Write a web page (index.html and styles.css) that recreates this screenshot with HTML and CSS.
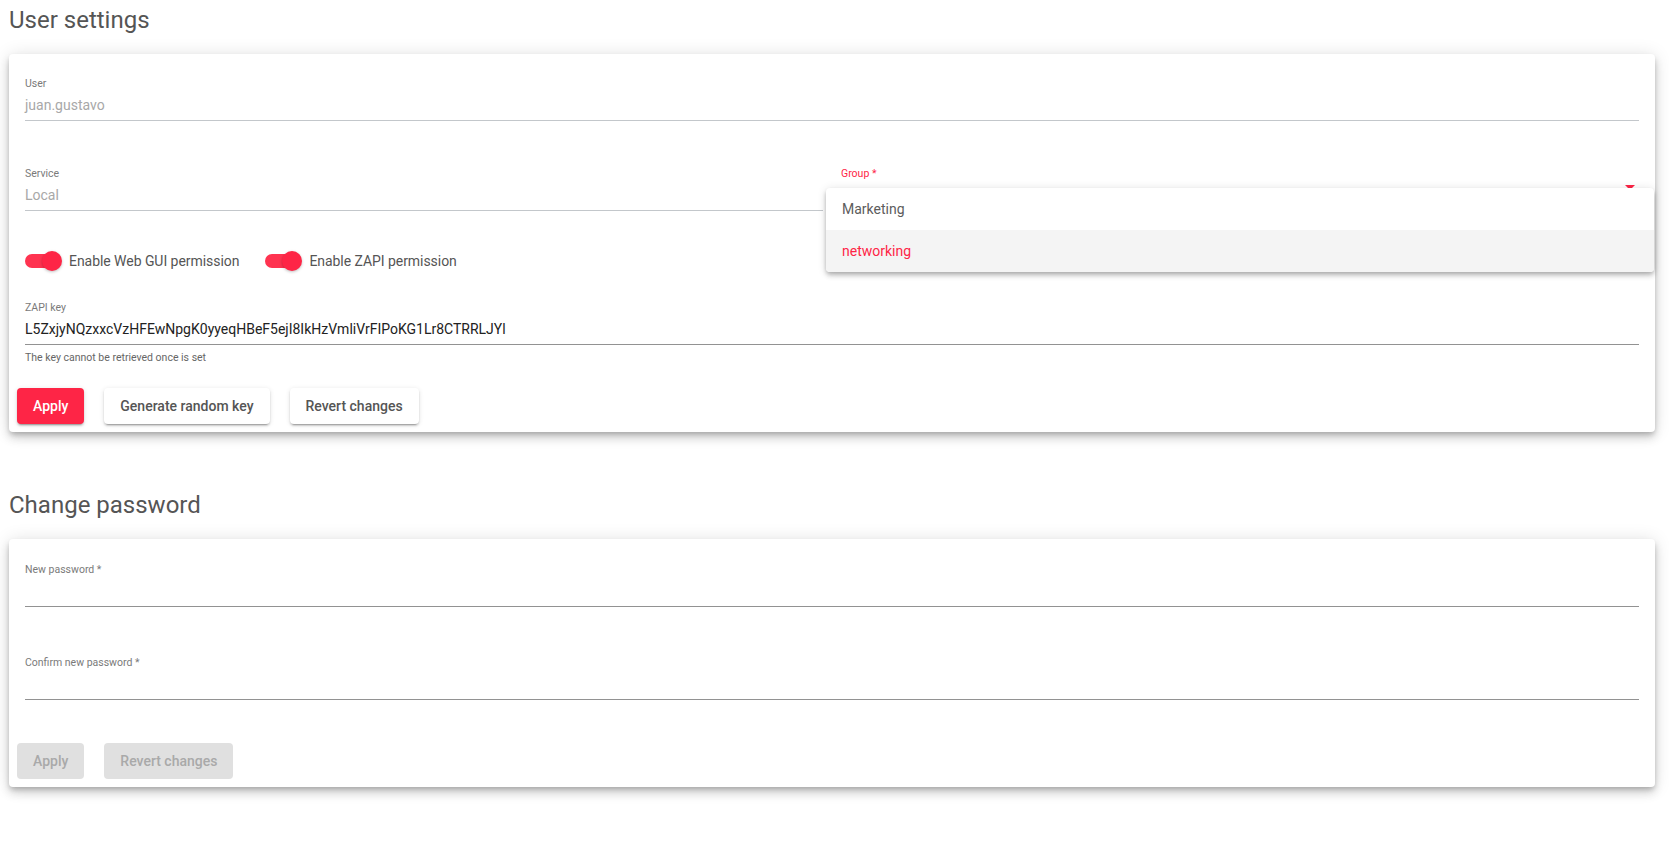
FILE: index.html
```html
<!DOCTYPE html>
<html lang="en">

<head>
    <meta charset="UTF-8">
    <meta name="viewport" content="width=device-width, initial-scale=1.0">
    <title>User settings</title>
    <link rel="stylesheet" href="styles.css">
</head>

<body>
    <div class="page">
        <h2 class="section-title">User settings</h2>

        <div class="card">
            <div class="field field-user">
                <div class="field-label">User</div>
                <div class="field-value muted">juan.gustavo</div>
            </div>

            <div class="two-cols">
                <div class="field">
                    <div class="field-label">Service</div>
                    <div class="field-value muted">Local</div>
                </div>
                <div class="field field-select">
                    <div class="field-label active">Group *</div>
                    <div class="field-value"></div>
                    <span class="select-arrow"></span>
                    <div class="select-panel">
                        <div class="option">Marketing</div>
                        <div class="option selected">networking</div>
                    </div>
                </div>
            </div>

            <div class="toggles">
                <label class="toggle">
                    <span class="toggle-bar"><span class="toggle-thumb"></span></span>
                    <span class="toggle-text">Enable Web GUI permission</span>
                </label>
                <label class="toggle">
                    <span class="toggle-bar"><span class="toggle-thumb"></span></span>
                    <span class="toggle-text">Enable ZAPI permission</span>
                </label>
            </div>

            <div class="field field-key">
                <div class="field-label">ZAPI key</div>
                <div class="field-value dark">L5ZxjyNQzxxcVzHFEwNpgK0yyeqHBeF5ejI8IkHzVmliVrFIPoKG1Lr8CTRRLJYl</div>
            </div>
            <div class="hint">The key cannot be retrieved once is set</div>

            <div class="actions">
                <button class="btn btn-primary">Apply</button>
                <button class="btn">Generate random key</button>
                <button class="btn">Revert changes</button>
            </div>
        </div>

        <h2 class="section-title second">Change password</h2>

        <div class="card card-pw">
            <div class="field field-key">
                <div class="field-label">New password *</div>
                <div class="field-value"></div>
            </div>
            <div class="field field-key confirm">
                <div class="field-label">Confirm new password *</div>
                <div class="field-value"></div>
            </div>

            <div class="actions actions-pw">
                <button class="btn btn-disabled" disabled>Apply</button>
                <button class="btn btn-disabled" disabled>Revert changes</button>
            </div>
        </div>
    </div>
</body>

</html>
```

FILE: styles.css
```css
/* Reset some default styles */
body,
h2,
p {
    margin: 0;
    padding: 0;
}

body {
    font-family: Roboto, "Liberation Sans", Arial, sans-serif;
    background-color: #fff;
    color: #333;
}

.page {
    padding: 4px 14px 40px 9px;
}

.section-title {
    font-size: 24px;
    line-height: 32px;
    font-weight: 400;
    color: #555;
    margin-bottom: 18px;
}

.section-title.second {
    margin-top: 57px;
}

/* Card */
.card {
    background-color: #fff;
    border-radius: 4px;
    padding: 24px 16px 8px 16px;
    box-shadow: 0 3px 5px -1px rgba(0, 0, 0, .2), 0 6px 10px 0 rgba(0, 0, 0, .14), 0 1px 18px 0 rgba(0, 0, 0, .12);
}

.card-pw {
    padding-top: 25px;
}

/* Form fields */
.field {
    position: relative;
    border-bottom: 1px solid #c3c7cb;
}

.field-label {
    font-size: 10.5px;
    line-height: 12px;
    color: #7a7a7a;
}

.field-label.active {
    color: #fe2546;
}

.field-value {
    font-size: 14px;
    line-height: 20px;
    height: 20px;
    margin-top: 5px;
    margin-bottom: 5px;
    white-space: nowrap;
}

.muted {
    color: #a8a8a8;
}

.dark {
    color: #222;
}

.two-cols {
    display: grid;
    grid-template-columns: 1fr 1fr;
    gap: 18px;
    margin-top: 47px;
}

.field-select {
    border-bottom-color: #fe2546;
}

.select-arrow {
    position: absolute;
    right: 4px;
    top: 17px;
    width: 0;
    height: 0;
    border-left: 5px solid transparent;
    border-right: 5px solid transparent;
    border-top: 5px solid #fe2546;
}

.select-panel {
    position: absolute;
    top: 20px;
    left: -15px;
    right: -15px;
    background-color: #fff;
    border-radius: 4px;
    z-index: 2;
    box-shadow: 0 2px 4px -1px rgba(0, 0, 0, .2), 0 4px 5px 0 rgba(0, 0, 0, .14), 0 1px 10px 0 rgba(0, 0, 0, .12);
    overflow: hidden;
}

.option {
    height: 42px;
    line-height: 42px;
    padding: 0 16px;
    font-size: 14px;
    color: #5c5c5c;
}

.option.selected {
    background-color: #f4f4f4;
    color: #fe2546;
}

/* Toggles */
.toggles {
    display: flex;
    gap: 26px;
    margin-top: 40px;
    height: 20px;
}

.toggle {
    display: flex;
    align-items: center;
    gap: 8px;
}

.toggle-bar {
    position: relative;
    width: 36px;
    height: 14px;
    border-radius: 7px;
    background-color: #ff3350;
}

.toggle-thumb {
    position: absolute;
    right: -1px;
    top: -3px;
    width: 20px;
    height: 20px;
    border-radius: 50%;
    background-color: #fe2546;
    box-shadow: 0 1px 3px rgba(0, 0, 0, .25);
}

.toggle-text {
    font-size: 14px;
    color: #555;
    letter-spacing: -0.05px;
}

.field-key {
    margin-top: 31px;
    border-bottom-color: #929292;
}

.field-key.confirm {
    margin-top: 50px;
}

.card > .field-key:first-child {
    margin-top: 0;
}

.hint {
    font-size: 10.5px;
    line-height: 12px;
    color: #666;
    margin-top: 7px;
}

/* Button styles */
.actions {
    display: flex;
    gap: 20px;
    margin-top: 24px;
    margin-left: -8px;
}

.actions-pw {
    margin-top: 43px;
}

.btn {
    font-family: Roboto, "Liberation Sans", Arial, sans-serif;
    font-size: 14px;
    font-weight: 500;
    height: 36px;
    line-height: 36px;
    padding: 0 16px;
    min-width: 64px;
    border: none;
    border-radius: 4px;
    background-color: #fff;
    color: #555;
    cursor: pointer;
    box-shadow: 0 3px 1px -2px rgba(0, 0, 0, .2), 0 2px 2px 0 rgba(0, 0, 0, .14), 0 1px 5px 0 rgba(0, 0, 0, .12);
}

.btn-primary {
    background-color: #fe2546;
    color: #fff;
}

.btn-disabled {
    background-color: #e0e0e0;
    color: #a9a9a9;
    box-shadow: none;
    cursor: default;
}
```
